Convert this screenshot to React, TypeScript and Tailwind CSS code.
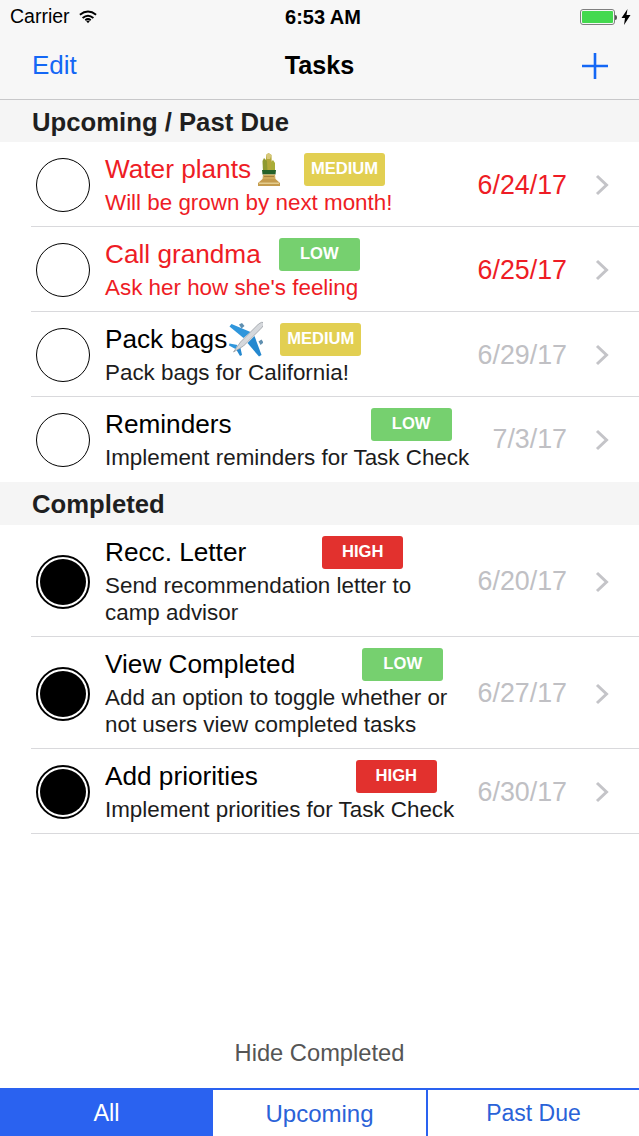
import React from "react";

const RED = "text-[#ee1c25]";

function Kadomatsu() {
  return (
    <svg width="24" height="33" viewBox="0 0 24 33" className="shrink-0 ml-[6px]">
      <path d="M11.5 0 L14.5 2 L15 19 L9 19 L9 2Z" fill="#b3a83a" />
      <path d="M11.5 0 L14.5 2 L13 6 L10 6 L9 2Z" fill="#d8c87a" />
      <path d="M7 5 L10 8 L10.5 19 L6 19 L5.5 8Z" fill="#8f9a30" />
      <path d="M16 7 L18 10 L18 19 L14 19 L14 9Z" fill="#a9ad38" />
      <path d="M5 17 L19 17 L18.5 21.5 L5.5 21.5Z" fill="#24612a" />
      <path d="M6 21.5 H18 L18.5 26 H5.5Z" fill="#d0ab5c" />
      <path d="M7 23 H17 V24 H7Z" fill="#a8833f" />
      <path d="M5.5 26 H18.5 L23 30 V33 H1 V30Z" fill="#c49c4e" />
      <path d="M2 29.5 H22 V31 H2Z" fill="#e4cd8e" />
    </svg>
  );
}

function Plane() {
  return (
    <svg width="34" height="36" viewBox="4 3 34 36" className="shrink-0 ml-[2px] mt-[-2px]">
      <g transform="translate(3.5 0)">
        <path d="M22 14 L3 6 L1 8.5 L15 20Z" fill="#2f96dc" />
        <path d="M26 18 L33 37 L30.5 38.5 L19 25Z" fill="#2488cf" />
        <path d="M10.5 6.5 L13.5 5 L16 8 L13 10.5Z" fill="#5f8fb0" />
        <path d="M30 23.5 L33 21.5 L35 24.5 L32 27Z" fill="#5f8fb0" />
        <path d="M9 27 L1 25.5 L0.5 27.5 L7 31Z" fill="#2f96dc" />
        <path d="M12 30 L13.5 37 L11.5 38 L8 32Z" fill="#2488cf" />
        <path d="M35.5 4.5 Q33 3.5 30 6 L12 24 L5 34 L15 28 L33 10 Q36.5 6.5 35.5 4.5Z" fill="#d5d8dc" stroke="#8f959b" strokeWidth="0.7" />
      </g>
    </svg>
  );
}

function Badge({ label, color, ml }: { label: string; color: string; ml: string }) {
  return (
    <div className={`h-[33px] w-[81px] shrink-0 rounded-[3px] flex items-center justify-center text-white font-bold text-[16.6px] ${color} ${ml}`}>
      {label}
    </div>
  );
}

function Chevron() {
  return (
    <svg width="14" height="22" viewBox="0 0 14 22" fill="none" stroke="#c4c4c8" strokeWidth="3" className="shrink-0">
      <path d="M2 2 L11.5 11 L2 20" />
    </svg>
  );
}

type Row = {
  title: string;
  emoji?: React.ReactNode;
  sub: React.ReactNode;
  label: string;
  color: string;
  ml: string;
  date: string;
  red?: boolean;
  done?: boolean;
  h: string;
  last?: boolean;
};

const YEL = "bg-[#e2cf52]";
const GRN = "bg-[#76d06f]";
const HI = "bg-[#e2312e]";

const upcoming: Row[] = [
  { title: "Water plants", emoji: <Kadomatsu />, sub: "Will be grown by next month!", label: "MEDIUM", color: YEL, ml: "ml-[23px]", date: "6/24/17", red: true, h: "h-[85px]" },
  { title: "Call grandma", sub: "Ask her how she's feeling", label: "LOW", color: GRN, ml: "ml-[18px]", date: "6/25/17", red: true, h: "h-[85px]" },
  { title: "Pack bags", emoji: <Plane />, sub: "Pack bags for California!", label: "MEDIUM", color: YEL, ml: "ml-[17px]", date: "6/29/17", h: "h-[85px]" },
  { title: "Reminders", sub: "Implement reminders for Task Check", label: "LOW", color: GRN, ml: "ml-[139px]", date: "7/3/17", h: "h-[85px]", last: true },
];

const completed: Row[] = [
  { title: "Recc. Letter", sub: <>Send recommendation letter to<br />camp advisor</>, label: "HIGH", color: HI, ml: "ml-[76px]", date: "6/20/17", done: true, h: "h-[112px]" },
  { title: "View Completed", sub: <>Add an option to toggle whether or<br />not users view completed tasks</>, label: "LOW", color: GRN, ml: "ml-[67px]", date: "6/27/17", done: true, h: "h-[112px]" },
  { title: "Add priorities", sub: "Implement priorities for Task Check", label: "HIGH", color: HI, ml: "ml-[98px]", date: "6/30/17", done: true, h: "h-[85px]" },
];

function TaskRow({ r }: { r: Row }) {
  return (
    <div className={`${r.h} flex items-center pl-[31px] bg-white`}>
      <div className={`flex h-full flex-1 items-center border-b ${r.last ? "pt-[1px] border-transparent" : "pt-[2px] border-[#d9d9dc]"}`}>
        <div className={`ml-[5px] w-[54px] h-[54px] shrink-0 rounded-full border-black flex items-center justify-center ${r.done ? "border-2" : "border-[1.5px]"}`}>
          {r.done && <div className="w-[46px] h-[46px] rounded-full bg-black" />}
        </div>
        <div className="ml-[15px] flex-1 min-w-0 mt-[-1px]">
          <div className={`flex items-start h-[36px] ${r.red ? RED : "text-black"}`}>
            <span className="text-[26.2px] leading-[33px] whitespace-nowrap">{r.title}</span>
            {r.emoji}
            <Badge label={r.label} color={r.color} ml={r.ml} />
          </div>
          <div className={`text-[22.4px] leading-[27px] whitespace-nowrap ${r.red ? RED : "text-[#1c1c1c]"}`}>{r.sub}</div>
        </div>
        <div className={`text-[26.8px] whitespace-nowrap ml-auto ${r.red ? RED : "text-[#c0c0c4]"}`}>{r.date}</div>
        <div className="ml-[28px] mr-[30px]">
          <Chevron />
        </div>
      </div>
    </div>
  );
}

function Header({ children, h }: { children: React.ReactNode; h: string }) {
  return (
    <div className={`${h} bg-[#f5f5f5] pl-[32px] pt-[2px] flex items-center text-[25.7px] font-semibold text-[#1f1f1f]`}>
      {children}
    </div>
  );
}

export default function App() {
  return (
    <div className="w-[639px] h-[1136px] flex flex-col bg-white overflow-hidden" style={{ fontFamily: '"Liberation Sans", Arial, sans-serif' }}>
      <div className="h-[100px] bg-[#f7f7f7] border-b border-[#c8c8ca] flex flex-col shrink-0">
        <div className="h-[34px] flex items-center pl-[10px] pr-[8px] text-[19.5px] text-black relative">
          <span>Carrier</span>
          <svg width="18" height="14" viewBox="0 0 20 15" className="ml-[9px]" fill="none" stroke="#000" strokeWidth="2.2">
            <path d="M1 5 Q10 -2 19 5" />
            <path d="M4 8.5 Q10 3.5 16 8.5" />
            <path d="M7 11 Q10 8.5 13 11" />
            <path d="M8 12 L10 14.5 L12 12 Q10 10.5 8 12Z" fill="#000" stroke="none" />
          </svg>
          <span className="absolute left-0 right-0 pl-[7px] text-center font-semibold text-[20px]">6:53 AM</span>
          <div className="ml-auto flex items-center">
            <div className="w-[35px] h-[16px] rounded-[3px] border border-[#7f7f7f] p-[1px]">
              <div className="w-full h-full rounded-[1px] bg-[#44d94f]" />
            </div>
            <div className="w-[2px] h-[5px] bg-[#555] rounded-r-[2px]" />
            <svg width="10" height="16" viewBox="0 0 10 16" className="ml-[4px]">
              <path d="M6.5 0 L0.5 9 H4 L3 16 L9.5 6 H5.5Z" fill="#000" />
            </svg>
          </div>
        </div>
        <div className="flex-1 flex items-center justify-between pl-[32px] pr-[30px] relative pb-[2px]">
          <span className="text-[26px] text-[#1467f5]">Edit</span>
          <span className="absolute left-0 right-0 text-center text-[25.2px] font-semibold text-black pt-[1px]">Tasks</span>
          <svg width="28" height="28" viewBox="0 0 28 28" stroke="#1467f5" strokeWidth="2.6">
            <path d="M14 1 V27 M1 14 H27" />
          </svg>
        </div>
      </div>

      <Header h="h-[42px]">Upcoming / Past Due</Header>
      {upcoming.map((r) => (
        <TaskRow key={r.title} r={r} />
      ))}
      <Header h="h-[43px]">Completed</Header>
      {completed.map((r) => (
        <TaskRow key={r.title} r={r} />
      ))}

      <div className="flex-1 flex items-end justify-center pb-[16px] text-[23.7px] text-[#555555]">Hide Completed</div>
      <div className="h-[48px] shrink-0 flex border-t-2 border-[#2a62f0]">
        <div className="w-[213px] bg-[#2a62f0] text-white flex items-center justify-center pt-[1px] text-[23.5px]">All</div>
        <div className="w-[213px] text-[#2a62d8] flex items-center justify-center pt-[1px] text-[24px]">Upcoming</div>
        <div className="flex-1 border-l-2 border-[#2a62f0] text-[#2a62d8] flex items-center justify-center pt-[1px] text-[23px]">Past Due</div>
      </div>
    </div>
  );
}
